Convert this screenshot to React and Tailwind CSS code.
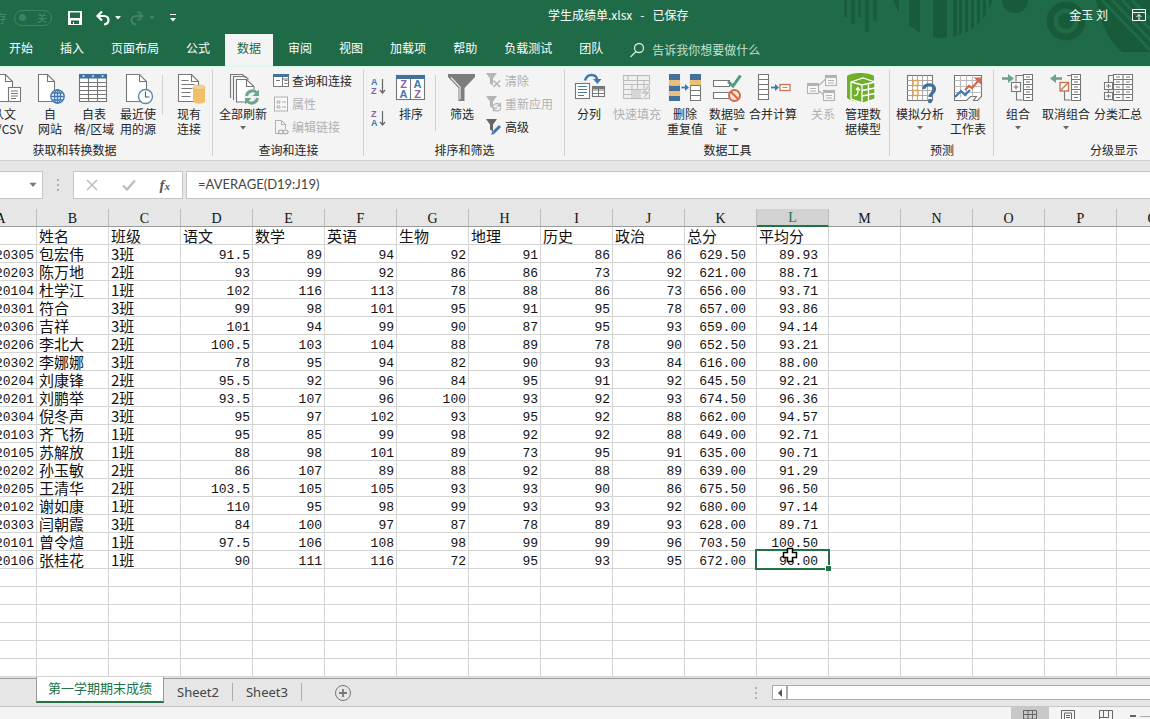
const TABS = ['开始', '插入', '页面布局', '公式', '数据', '审阅', '视图', '加载项', '帮助', '负载测试', '团队'];

const COLUMNS = ['A', 'B', 'C', 'D', 'E', 'F', 'G', 'H', 'I', 'J', 'K', 'L', 'M', 'N', 'O', 'P', 'Q'];

const TITLES = ['学号', '姓名', '班级', '语文', '数学', '英语', '生物', '地理', '历史', '政治', '总分', '平均分'];

const STUDENTS = [
  ['120305', '包宏伟', '3班', '91.5', '89', '94', '92', '91', '86', '86', '629.50', '89.93'],
  ['120203', '陈万地', '2班', '93', '99', '92', '86', '86', '73', '92', '621.00', '88.71'],
  ['120104', '杜学江', '1班', '102', '116', '113', '78', '88', '86', '73', '656.00', '93.71'],
  ['120301', '符合', '3班', '99', '98', '101', '95', '91', '95', '78', '657.00', '93.86'],
  ['120306', '吉祥', '3班', '101', '94', '99', '90', '87', '95', '93', '659.00', '94.14'],
  ['120206', '李北大', '2班', '100.5', '103', '104', '88', '89', '78', '90', '652.50', '93.21'],
  ['120302', '李娜娜', '3班', '78', '95', '94', '82', '90', '93', '84', '616.00', '88.00'],
  ['120204', '刘康锋', '2班', '95.5', '92', '96', '84', '95', '91', '92', '645.50', '92.21'],
  ['120201', '刘鹏举', '2班', '93.5', '107', '96', '100', '93', '92', '93', '674.50', '96.36'],
  ['120304', '倪冬声', '3班', '95', '97', '102', '93', '95', '92', '88', '662.00', '94.57'],
  ['120103', '齐飞扬', '1班', '95', '85', '99', '98', '92', '92', '88', '649.00', '92.71'],
  ['120105', '苏解放', '1班', '88', '98', '101', '89', '73', '95', '91', '635.00', '90.71'],
  ['120202', '孙玉敏', '2班', '86', '107', '89', '88', '92', '88', '89', '639.00', '91.29'],
  ['120205', '王清华', '2班', '103.5', '105', '105', '93', '93', '90', '86', '675.50', '96.50'],
  ['120102', '谢如康', '1班', '110', '95', '98', '99', '93', '93', '92', '680.00', '97.14'],
  ['120303', '闫朝霞', '3班', '84', '100', '97', '87', '78', '89', '93', '628.00', '89.71'],
  ['120101', '曾令煊', '1班', '97.5', '106', '108', '98', '99', '99', '96', '703.50', '100.50'],
  ['120106', '张桂花', '1班', '90', '111', '116', '72', '95', '93', '95', '672.00', '96.00'],
];

const EMPTY_ROWS = [20, 21, 22, 23, 24, 25];

function Icon({ children }) {
  return (
    <svg viewBox="0 0 32 32" className="w-8 h-8 shrink-0 overflow-visible" fill="none" stroke="#777" strokeWidth="1.1">
      {children}
    </svg>
  );
}

function SmallIcon({ children }) {
  return (
    <svg viewBox="0 0 16 16" className="w-4 h-4 shrink-0 overflow-visible" fill="none" stroke="#777" strokeWidth="1">
      {children}
    </svg>
  );
}

function Caret({ className = 'text-[#666]' }) {
  return (
    <svg viewBox="0 0 6 4" className={`w-[6px] h-[4px] inline-block ${className}`} fill="currentColor">
      <path d="M0 0h6L3 3.5z" />
    </svg>
  );
}

/* ---------- large ribbon icons ---------- */

const TextFileIcon = () => (
  <Icon>
    <path d="M4.5 2.5h13l7 7v20h-20z" fill="#fff" />
    <path d="M17.5 2.5v7h7" />
    <rect x="20.500" y="15.500" width="12" height="14" fill="#fff" />
    <path d="M23 19h7M23 21.500h7M23 24h7M23 26.500h5" />
  </Icon>
);

const WebIcon = () => (
  <Icon>
    <path d="M4.500 2.500h9l7 7v20h-16z" fill="#fff" />
    <path d="M13.500 2.500v7h7" />
    <g stroke="#3f78b0" strokeWidth="1.300">
      <circle cx="23.500" cy="24.500" r="6.700" fill="#eef5fb" />
      <ellipse cx="23.500" cy="24.500" rx="3" ry="6.700" />
      <path d="M17 24.500h13M18 21h11M18 28h11M23.500 18v13" />
    </g>
  </Icon>
);

const TableIcon = () => (
  <Icon>
    <rect x="1.500" y="2.500" width="27" height="27" fill="#fff" />
    <path d="M1.500 10.500h27M1.500 14.500h27M1.500 18.500h27M1.500 22.500h27M1.500 26.500h27M10.500 6v24M19.500 6v24" />
    <path d="M1 2h28v4.500H1z" fill="#41719c" stroke="none" />
    <path d="M4 3.500h3L5.500 5.200zM13.500 3.500h3L15 5.200zM23 3.500h3l-1.500 1.700z" fill="#fff" stroke="none" />
  </Icon>
);

const RecentIcon = () => (
  <Icon>
    <path d="M4.500 2.500h13l7 7v20h-20z" fill="#fff" />
    <path d="M17.500 2.500v7h7" />
    <circle cx="23.500" cy="24.500" r="7" fill="#fff" stroke="#5b87b3" strokeWidth="1.400" />
    <path d="M23.500 19.500v5.500h4" stroke="#555" />
  </Icon>
);

const ConnectionIcon = () => (
  <Icon>
    <path d="M5.500 2.500h13l7 7v20h-20z" fill="#fff" />
    <path d="M18.500 2.500v7h7" />
    <path d="M8.500 8.500h7M8.500 12.500h13M8.500 16.500h11M8.500 20.500h9M8.500 24.500h9" strokeWidth="1" />
    <path d="M20 15.500v13.500c0 3.500 12 3.500 12 0V15.500z" fill="#efbf6b" stroke="none" />
    <ellipse cx="26" cy="15.500" rx="6" ry="2.300" fill="#f5d392" stroke="#e3ae52" strokeWidth=".7" />
  </Icon>
);

const RefreshIcon = () => (
  <Icon>
    <path d="M3.500 26V2.500h12l3 3M6.500 28V4.500h12l3 3" />
    <path d="M9.500 30V7.500h10l7.500 7v15.500z" fill="#fff" />
    <path d="M19.500 7.500v7h7" />
    <circle cx="25" cy="25" r="8" fill="#f3f3f3" stroke="none" />
    <g stroke="#6fa48c" strokeWidth="3">
      <path d="M19.500 24a6 6 0 0 1 10-3.500M30.500 26a6 6 0 0 1-10 3.500" />
    </g>
    <path d="M32 17.500v6.500h-6.500zM18 32.500V26h6.500z" fill="#6fa48c" stroke="none" />
  </Icon>
);

const SortIcon = () => (
  <Icon>
    <rect x="1.500" y="3.500" width="28" height="24" fill="#fff" />
    <path d="M15.500 7v20" />
    <path d="M1 3h29v4H1z" fill="#41719c" stroke="none" />
    <g className="font-['Liberation_Sans'] font-bold text-[11px]" stroke="none" textAnchor="middle">
      <text x="8.500" y="16" fill="#8d5fa8">Z</text>
      <text x="8.500" y="26" fill="#3f78b0">A</text>
      <text x="22.500" y="16" fill="#3f78b0">A</text>
      <text x="22.500" y="26" fill="#8d5fa8">Z</text>
    </g>
  </Icon>
);

const FunnelIcon = () => (
  <Icon>
    <path d="M2 2h27v3L18.500 16v13h-6V16L2 5z" fill="#7d7d7d" stroke="none" />
    <path d="M5 5.500l9 9.500v12.500" stroke="#e4e4e4" strokeWidth="1.300" />
  </Icon>
);

const TextToColumnsIcon = () => (
  <Icon>
    <rect x="2.500" y="11.500" width="14" height="15" fill="#fff" />
    <path d="M5 14.500h9M5 17.500h9M5 20.500h9M5 23.500h6" stroke="#4a7a94" />
    <rect x="19.500" y="14.500" width="12" height="10" fill="#fff" />
    <path d="M19.500 18h12M19.500 21.500h12M25.500 15v9.500" />
    <path d="M19 14.500h13V17H19z" fill="#777" stroke="none" />
    <path d="M12 8.500c2-7 11-7.500 12.500 0" stroke="#3f78b0" strokeWidth="2.600" />
    <path d="M20 7h8.500L24.500 12z" fill="#3f78b0" stroke="none" />
  </Icon>
);

const FlashFillIcon = () => (
  <Icon>
    <g stroke="#bdbdbd">
      <rect x="2.500" y="3.500" width="26" height="23" fill="#f0f0f0" />
      <path d="M2.500 8.500h26M2.500 12.500h26M2.500 17.500h26M2.500 22.500h14M7 3.500v5M16.500 3.500v23M11 12.500v14M23 8.500v9" />
      <path d="M11 18h9v8h-9z" fill="#d6d6d6" stroke="none" />
      <path d="M27 13l-8 9h5l-4 8 10-11h-5l5-6z" fill="#c9c9c9" stroke="#f3f3f3" strokeWidth=".6" />
    </g>
  </Icon>
);

const RemoveDuplicatesIcon = () => (
  <Icon>
    <path d="M.5 2.500h10v26H.5zM21.500 2.500h10v26h-10z" fill="#fff" />
    <path d="M0 2h11v6H0zM0 13.500h11v5.500H0zM0 24h11v5H0zM21 2h11v6H21z" fill="#41719c" stroke="none" />
    <path d="M0 8h11v5.500H0zM0 19h11v5H0zM21 8h11v5.500H21z" fill="#e9bf7a" stroke="none" />
    <path d="M21.500 13.500h10M21.500 18.500h10M21.500 23.500h10" />
    <path d="M12.500 15.500h6" stroke="#3f78b0" strokeWidth="1.800" />
    <path d="M16 12l4 3.500-4 3.500z" fill="#3f78b0" stroke="none" />
  </Icon>
);

const ValidationIcon = () => (
  <Icon>
    <path d="M2.500 8.500h16v6h-16zM2.500 20.500h16v6h-16z" fill="#fff" />
    <path d="M17 9.500l5 4.500 7.500-10.500" stroke="#4f9a80" strokeWidth="3" />
    <circle cx="23.500" cy="23.500" r="5.500" fill="#fbe6dd" stroke="#d2694a" strokeWidth="2" />
    <path d="M19.700 19.700l7.600 7.600" stroke="#d2694a" strokeWidth="2" />
  </Icon>
);

const ConsolidateIcon = () => (
  <Icon>
    <path d="M1.500 2.500h10v25h-10zM1.500 7.500h10M1.500 12.500h10M1.500 17.500h10M1.500 22.500h10" fill="#fff" />
    <path d="M14 15.500h6" stroke="#3f78b0" strokeWidth="1.800" />
    <path d="M18 12l4 3.500-4 3.500z" fill="#3f78b0" stroke="none" />
    <rect x="23" y="12.500" width="10" height="6" fill="#fff" stroke="#cf7650" strokeWidth="1.300" />
    <path d="M25.500 15.500h5" stroke="#999" />
  </Icon>
);

const RelationsIcon = () => (
  <Icon>
    <g stroke="#b3b3b3">
      <path d="M11 14l9-8M11 18l7 6" />
      <rect x=".5" y="11.500" width="11" height="10" fill="#f7f7f7" />
      <rect x="18.500" y="3.500" width="11" height="10" fill="#f7f7f7" />
      <rect x="16.500" y="18.500" width="11" height="10" fill="#f7f7f7" />
      <path d="M3 16.500h6M3 19h6M21 8.500h6M21 11h6M19 23.500h6M19 26h6" />
      <path d="M0 11h12v3H0zM18 3h12v3H18zM16 18h12v3H16z" fill="#b3b3b3" stroke="none" />
    </g>
  </Icon>
);

const DataModelIcon = () => (
  <Icon>
    <path d="M0 4C4 0 22 0 27 4v20c-6 7-21 7-27 2z" fill="#6faf2c" stroke="none" />
    <g fill="#6faf2c" stroke="#fff" strokeWidth="1.300">
      <path d="M4 10l12-4 12 4v17l-12 4-12-4z" />
      <path d="M4 10l11 3 13-3M15 13v17.500M15 18.500l13-2.500M15 24l13-2.500M21.500 11.500V29" />
      <path d="M7 23.500c4 .5 4-2 4-7M9 18l2-2.500 2 3" />
    </g>
  </Icon>
);

const WhatIfIcon = () => (
  <Icon>
    <rect x="3.500" y="3.500" width="25" height="25" fill="#fff" />
    <path d="M8.500 3.500v25M13.500 3.500v25M18.500 3.500v25M23.500 3.500v25M3.500 8.500h25M3.500 13.500h25M3.500 18.500h25M3.500 23.500h25" stroke="#aaa" />
    <path d="M9 8.500h5v5H9zM9 18.500h5v5H9z" fill="#fff" stroke="#e0a04a" strokeWidth="1.400" />
    <path d="M20 17c-.5-5.500 10.500-5.500 10.500 0 0 4-4.500 4-4.500 8" stroke="#41719c" strokeWidth="3.300" />
    <circle cx="26" cy="29" r="2.200" fill="#41719c" stroke="none" />
  </Icon>
);

const ForecastIcon = () => (
  <Icon>
    <path d="M2.500 3.500h27v21l-4 4h-4l3-4h-6l-4 4h-12z" fill="#fff" />
    <path d="M8.500 3.500v22M14.500 3.500v21M20.500 3.500v21M2.500 8.500h27M2.500 14.500h27M2.500 20.500h27" stroke="#bbb" />
    <path d="M3 25l6-6 4 4 5-5" stroke="#3f78b0" strokeWidth="2.200" />
    <path d="M13 18l4-4 3 2 7-8" stroke="#d2694a" strokeWidth="2.200" />
    <path d="M23 6h6v6z" fill="#d2694a" stroke="#d2694a" />
  </Icon>
);

const OutlineTable = () => (
  <g>
    <path d="M21.500 2.500h9v26h-9z" fill="#fff" />
    <path d="M21.500 7.500h9M21.500 12.500h9M21.500 17.500h9M21.500 22.500h9M24 5h4M24 10h4M24 15h4M24 20h4M24 25.500h4" />
  </g>
);

const GroupIcon = () => (
  <Icon>
    <OutlineTable />
    <path d="M21 3.500h-7v6M14.500 19v9h6" />
    <rect x="9.500" y="10.500" width="9" height="9" fill="#fff" />
    <path d="M11.500 15h5M14 12.500v5" />
    <path d="M0 6.500h8" stroke="#6fa48c" strokeWidth="2.600" />
    <path d="M6 2l6 4.500L6 11z" fill="#6fa48c" stroke="none" />
  </Icon>
);

const UngroupIcon = () => (
  <Icon>
    <OutlineTable />
    <path d="M21 3.500h-4M14.500 19v9h6" />
    <rect x="10" y="10.500" width="8.500" height="8.500" fill="#fff" stroke="#cf7650" strokeWidth="1.400" />
    <path d="M10 19l8.500-8.500" stroke="#cf7650" strokeWidth="1.400" />
    <path d="M4 6.500h8" stroke="#6fa48c" strokeWidth="2.600" />
    <path d="M6 2L0 6.500 6 11z" fill="#6fa48c" stroke="none" />
  </Icon>
);

const SubtotalIcon = () => (
  <Icon>
    <path d="M11.500 2.500h19v26h-19zM21 2.500v26M11.500 7.500h19M11.500 12.500h19M11.500 17.500h19M11.500 22.500h19" fill="#fff" />
    <path d="M14 5h4M14 10h4M14 15h4M14 20h4M14 25.500h4M24 5h4M24 10h4M24 15h4M24 20h4M24 25.500h4" />
    <path d="M11 3.500H6.500v23H11" />
    <rect x="2.500" y="10.500" width="8" height="7" fill="#fff" />
    <rect x="2.500" y="20.500" width="8" height="7" fill="#fff" />
    <path d="M4 14h5M6.500 12v4M4 24h5M6.500 22v4" />
  </Icon>
);

/* ---------- small ribbon icons ---------- */

const QueriesIcon = () => (
  <SmallIcon>
    <rect x=".5" y="1.500" width="15" height="12" fill="#fff" />
    <path d="M0 1h16v3H0z" fill="#41719c" stroke="none" />
    <path d="M9.500 4v9.500M3 7.500h4M11.500 7.500h3M11.500 10.500h3M9.500 6h6" />
  </SmallIcon>
);

const PropertiesIcon = () => (
  <SmallIcon>
    <g stroke="#b0b0b0">
      <rect x="1.500" y="1" width="13" height="14" fill="#f8f8f8" />
      <path d="M4 5h3v2H4zM4 10h3v2H4zM9 6h4M9 11h4" />
    </g>
  </SmallIcon>
);

const EditLinksIcon = () => (
  <SmallIcon>
    <g stroke="#b0b0b0">
      <path d="M6 14.500H2.500V1.500h6l4 4V10M8.500 1.500v4h4" />
      <ellipse cx="8" cy="13" rx="2.500" ry="1.800" strokeWidth="1.300" />
      <ellipse cx="12.500" cy="13" rx="2.500" ry="1.800" strokeWidth="1.300" />
    </g>
  </SmallIcon>
);

const ClearIcon = () => (
  <SmallIcon>
    <path d="M0 0h11L7 5.500V12.500l-3-2V5.500z" fill="#b5b5b5" stroke="none" />
    <path d="M7.500 7.500l6.500 6.500M14 7.500L7.500 14" stroke="#b5b5b5" strokeWidth="1.500" />
  </SmallIcon>
);

const ReapplyIcon = () => (
  <SmallIcon>
    <path d="M0 0h11L7 5.500V12.500l-3-2V5.500z" fill="#b5b5b5" stroke="none" />
    <path d="M7 10.500a4 4 0 0 1 7-1.500M15 11.500a4 4 0 0 1-7 2M14.500 6.500V10H11M7.500 15.500V12H11" stroke="#b5b5b5" strokeWidth="1.300" />
  </SmallIcon>
);

const AdvancedIcon = () => (
  <SmallIcon>
    <path d="M0 0h11L7 5.500V12.500l-3-2V5.500z" fill="#666" stroke="none" />
    <path d="M7.500 13.500l6.500-6.500" stroke="#3f78b0" strokeWidth="3" />
    <path d="M5 16l1.300-3.700 2.400 2.400z" fill="#3f78b0" stroke="none" />
  </SmallIcon>
);

function SortOrderIcon({ top, bottom, topColor, bottomColor }) {
  return (
    <svg viewBox="0 0 16 20" className="w-4 h-5 overflow-visible" fill="none">
      <g className="font-['Liberation_Sans'] font-bold text-[9px]">
        <text x="0" y="8" fill={topColor}>{top}</text>
        <text x="0" y="17" fill={bottomColor}>{bottom}</text>
      </g>
      <path d="M11.500 2v14M9 13l2.500 3 2.500-3" stroke="#666" strokeWidth="1.200" />
    </svg>
  );
}

/* ---------- ribbon ---------- */

function BigButton({ icon, lines, width = 'w-12', menu, disabled }) {
  return (
    <button
      disabled={disabled}
      className={`flex flex-col items-center shrink-0 pt-[5px] whitespace-nowrap leading-[15px] ${width} ${disabled ? 'text-[#b1b1b1]' : ''}`}
    >
      {icon}
      <span className="block mt-0.5">{lines[0]}</span>
      {lines[1] && <span className="block">{lines[1]}{menu && <Caret className="text-[#666] ml-1.5 mb-0.5" />}</span>}
      {menu && !lines[1] && <Caret className="text-[#666] mt-[5px]" />}
    </button>
  );
}

function SmallButton({ icon, label, disabled }) {
  return (
    <button disabled={disabled} className={`flex items-center gap-[3px] h-[23px] whitespace-nowrap ${disabled ? 'text-[#b1b1b1]' : ''}`}>
      {icon}
      {label}
    </button>
  );
}

function RibbonGroup({ label, className, inner = '', children }) {
  return (
    <section className={`flex flex-col justify-between shrink-0 relative pb-[3px] ${className}`}>
      <div className={`flex ${inner}`}>{children}</div>
      <h2 className="text-center leading-[15px]">{label}</h2>
      <span className="absolute right-0 top-[3px] bottom-1 w-px bg-[#d2d2d2]" />
    </section>
  );
}

function Ribbon() {
  return (
    <div className="flex h-[95px] shrink-0 border-t border-b border-t-[#d5f8e8] border-b-[#cfcfcf] bg-[#f4f4f4] text-[#262626] overflow-hidden">
      <RibbonGroup label="获取和转换数据" className="w-[277px] -ml-16" inner="justify-end">
        <BigButton icon={<TextFileIcon />} lines={['从文', '本/CSV']} />
        <BigButton icon={<WebIcon />} lines={['自', '网站']} width="w-11" />
        <BigButton icon={<TableIcon />} lines={['自表', '格/区域']} width="w-11" />
        <BigButton icon={<RecentIcon />} lines={['最近使', '用的源']} width="w-11" />
        <span className="w-px h-10 mt-2 mx-0.5 bg-[#d2d2d2]" />
        <BigButton icon={<ConnectionIcon />} lines={['现有', '连接']} />
      </RibbonGroup>

      <RibbonGroup label="查询和连接" className="w-[151px]" inner="pl-0.5">
        <BigButton icon={<RefreshIcon />} lines={['全部刷新']} width="w-14" menu />
        <div className="pt-0.5 pl-0.5">
          <SmallButton icon={<QueriesIcon />} label="查询和连接" />
          <SmallButton icon={<PropertiesIcon />} label="属性" disabled />
          <SmallButton icon={<EditLinksIcon />} label="编辑链接" disabled />
        </div>
      </RibbonGroup>

      <RibbonGroup label="排序和筛选" className="w-[201px]" inner="pl-[3px]">
        <div className="flex flex-col items-center w-6 pt-[10px] gap-3">
          <button aria-label="升序"><SortOrderIcon top="A" bottom="Z" topColor="#3f78b0" bottomColor="#8d5fa8" /></button>
          <button aria-label="降序"><SortOrderIcon top="Z" bottom="A" topColor="#8d5fa8" bottomColor="#3f78b0" /></button>
        </div>
        <BigButton icon={<SortIcon />} lines={['排序']} width="w-10" />
        <span className="w-px h-14 mt-2 ml-1 mr-0.5 bg-[#d2d2d2]" />
        <BigButton icon={<FunnelIcon />} lines={['筛选']} />
        <div className="pt-0.5">
          <SmallButton icon={<ClearIcon />} label="清除" disabled />
          <SmallButton icon={<ReapplyIcon />} label="重新应用" disabled />
          <SmallButton icon={<AdvancedIcon />} label="高级" />
        </div>
      </RibbonGroup>

      <RibbonGroup label="数据工具" className="w-[325px]">
        <BigButton icon={<TextToColumnsIcon />} lines={['分列']} />
        <BigButton icon={<FlashFillIcon />} lines={['快速填充']} disabled />
        <BigButton icon={<RemoveDuplicatesIcon />} lines={['删除', '重复值']} />
        <BigButton icon={<ValidationIcon />} lines={['数据验', '证']} width="w-9" menu />
        <BigButton icon={<ConsolidateIcon />} lines={['合并计算']} width="w-14" />
        <BigButton icon={<RelationsIcon />} lines={['关系']} width="w-11" disabled />
        <BigButton icon={<DataModelIcon />} lines={['管理数', '据模型']} width="w-9" />
      </RibbonGroup>

      <RibbonGroup label="预测" className="w-[104px]" inner="pl-1">
        <BigButton icon={<WhatIfIcon />} lines={['模拟分析']} width="w-13" menu />
        <BigButton icon={<ForecastIcon />} lines={['预测', '工作表']} width="w-11" />
      </RibbonGroup>

      <RibbonGroup label="分级显示" className="w-60">
        <BigButton icon={<GroupIcon />} lines={['组合']} menu />
        <BigButton icon={<UngroupIcon />} lines={['取消组合']} menu />
        <BigButton icon={<SubtotalIcon />} lines={['分类汇总']} width="w-14" />
      </RibbonGroup>
    </div>
  );
}

/* ---------- title bar ---------- */

function TitleArt() {
  return (
    <svg viewBox="0 0 310 66" className="absolute right-0 top-0 w-[310px] h-[66px]" fill="#185b3a">
      <defs>
        <clipPath id="disc"><circle cx="103" cy="-13" r="51" /></clipPath>
        <clipPath id="corner"><path d="M256 0h54v52h-28C268 40 260 22 256 0z" /></clipPath>
      </defs>
      <path d="M4 0h3v17H4zM11 0h4v24h-4zM18 0h3v17h-3zM25 0h4v32h-4zM33 0h4v21h-4z" opacity=".8" />
      <g clipPath="url(#disc)">
        <path d="M44 0h15v40H44zM69 0h11v40H69zM93 0h14v40H93zM113 0h4v40h-4zM119 0h3v40h-3zM125 0h3v40h-3zM131 0h3v40h-3zM137 0h3v40h-3zM143 0h3v40h-3zM149 0h3v40h-3z" />
      </g>
      <circle cx="175" cy="0" r="13" />
      <circle cx="226" cy="21" r="16" fill="none" stroke="#185b3a" strokeWidth="7" />
      <circle cx="226" cy="21" r="8" />
      <g clipPath="url(#corner)">
        <path d="M250 0h60v52h-60z" />
        <path d="M262 0l50 52M272 0l50 52M282 0l50 52M292 0l50 52" stroke="#1f6b47" strokeWidth="3" />
      </g>
    </svg>
  );
}

function TitleBar() {
  return (
    <div className="relative flex items-center h-[34px]">
      <div className="flex items-center w-[548px] shrink-0 pt-px">
        <button role="switch" aria-checked="false" className="flex items-center gap-[7px] -ml-[41px] text-[#4a8a6b]">
          自动保存
          <span className="flex items-center justify-between w-[38px] h-4 border border-[#3f8262] rounded-full px-1 text-[10px]">
            <span className="w-[7px] h-[7px] rounded-full bg-[#3f8262]" />
            关
          </span>
        </button>
        <button aria-label="保存" className="ml-[15px]">
          <svg viewBox="0 0 16 16" className="w-4 h-4">
            <path d="M1 1h14v14H1z" fill="#fff" />
            <path d="M3 2.500h10V8H3zM4 10.500h8V14H7v-2H6v2H4z" fill="#1f6b47" />
          </svg>
        </button>
        <button aria-label="撤消" className="flex items-center gap-1 ml-3">
          <svg viewBox="0 0 16 16" className="w-4 h-4" fill="none" stroke="#fff" strokeWidth="2.200">
            <path d="M7 1.500L2.500 6 7 10.500M2.500 6h6.500c6 0 6 8 0 8.500" />
          </svg>
          <Caret className="text-white" />
        </button>
        <button aria-label="恢复" disabled className="flex items-center gap-1 ml-2">
          <svg viewBox="0 0 16 16" className="w-4 h-4" fill="none" stroke="#3f8262" strokeWidth="2.200">
            <path d="M9 1.500L13.500 6 9 10.500M13.500 6H7c-6 0-6 8 0 8.500" />
          </svg>
          <Caret className="text-[#3f8262]" />
        </button>
        <button aria-label="自定义快速访问工具栏" className="flex flex-col items-center gap-[3px] ml-[15px]">
          <span className="w-[6px] h-px bg-white" />
          <Caret className="text-white" />
        </button>
      </div>
      <h1 className="flex gap-2 pb-1">
        <span>学生成绩单.xlsx</span>
        <span>-</span>
        <span>已保存</span>
      </h1>
      <span className="ml-auto pb-1">金玉 刘</span>
      <button aria-label="功能区显示选项" className="ml-6 mr-1 pb-1">
        <svg viewBox="0 0 14 12" className="w-[14px] h-3" fill="none" stroke="#fff">
          <path d="M.5.500h13v11H.5zM.5 3.500h13M7 11V5.500M4.500 8L7 5.500 9.500 8" />
        </svg>
      </button>
    </div>
  );
}

function TabBar() {
  return (
    <nav className="relative flex items-stretch h-8 gap-[3px] -ml-[3px]">
      {TABS.map((tab) => (
        <button
          key={tab}
          className={`px-3 pb-1 whitespace-nowrap ${tab === '数据' ? 'bg-[#f4f4f4] text-[#1f6b47]' : ''}`}
        >
          {tab}
        </button>
      ))}
      <label className="flex items-center gap-[7px] pl-[11px]">
        <svg viewBox="0 0 16 16" className="w-4 h-4" fill="none" stroke="#d5eadf" strokeWidth="1.300">
          <circle cx="10" cy="6" r="4.500" />
          <path d="M7 9.500L1.500 15" />
        </svg>
        <input placeholder="告诉我你想要做什么" className="w-40 pb-px bg-transparent outline-none placeholder:text-[#c5e0d2]" />
      </label>
    </nav>
  );
}

function FormulaBar() {
  return (
    <div className="flex h-12 shrink-0 py-[10px] text-[#444]">
      <div className="flex items-center w-[107px] -ml-16 shrink-0 bg-white border border-[#c6c6c6]">
        <input aria-label="名称框" className="w-20 pl-2 outline-none" />
        <button aria-label="名称框列表" className="flex ml-auto mr-1.5"><Caret className="text-[#777] scale-125" /></button>
      </div>
      <span className="flex flex-col justify-center items-center gap-[3px] w-[30px]">
        <i className="w-0.5 h-0.5 bg-[#b0b0b0]" />
        <i className="w-0.5 h-0.5 bg-[#b0b0b0]" />
        <i className="w-0.5 h-0.5 bg-[#b0b0b0]" />
      </span>
      <div className="flex items-center justify-between w-[110px] shrink-0 px-3 bg-white border border-[#c6c6c6]">
        <button aria-label="取消">
          <svg viewBox="0 0 12 12" className="w-3 h-3" stroke="#bcbcbc" strokeWidth="1.500"><path d="M1 1l10 10M11 1L1 11" /></svg>
        </button>
        <button aria-label="输入">
          <svg viewBox="0 0 14 12" className="w-[14px] h-3" fill="none" stroke="#bcbcbc" strokeWidth="2.300"><path d="M1 6.500L5 10.500 13 1.500" /></svg>
        </button>
        <button aria-label="插入函数" className="font-['Liberation_Serif',serif] italic font-bold text-[15px] leading-4 text-[#555]">
          f<span className="text-[11px]">x</span>
        </button>
      </div>
      <input
        aria-label="编辑栏"
        defaultValue="=AVERAGE(D19:J19)"
        className="flex-1 min-w-0 ml-[3px] pl-[11px] bg-white border border-r-0 border-[#c6c6c6] outline-none font-['Lato',sans-serif] text-[13px]"
      />
    </div>
  );
}

/* ---------- sheet ---------- */

function CellCursor() {
  return (
    <svg viewBox="0 0 16 16" className="absolute left-[25px] -top-1 w-4 h-4" fill="#fff" stroke="#000" strokeWidth="1.500">
      <path d="M5.500 1.500h5v4h4v5h-4v4h-5v-4h-4v-5h4z" />
    </svg>
  );
}

function Cell({ value = '', col, active }) {
  const isText = col === 1 || col === 2;
  const align = isText ? 'pl-0.5 text-left' : col > 9 ? 'pr-[10px] text-right' : 'pr-0.5 text-right';
  return (
    <td
      className={`h-[18px] border-r border-b border-[#d4d4d4] whitespace-nowrap ${active ? 'relative z-10' : ''} ${align} ${
        isText
          ? "align-middle leading-[17px] text-[15px] font-['Noto_Sans_CJK_SC',sans-serif]"
          : "align-bottom leading-3 text-[13px] font-['Liberation_Mono',monospace]"
      }`}
    >
      {value}
      {active && (
        <>
          <span className="absolute -inset-0.5 border-2 border-[#217346]" />
          <span className="absolute -right-[3px] -bottom-[3px] w-[6px] h-[6px] bg-[#217346] border-t border-l border-white" />
          <CellCursor />
        </>
      )}
    </td>
  );
}

function Sheet() {
  return (
    <div className="shrink-0 overflow-hidden bg-white">
      <table className="table-fixed border-separate border-spacing-0 w-[1224px] -ml-[35px] text-[#111]">
        <thead>
          <tr>
            {COLUMNS.map((c) => (
              <th
                key={c}
                className={`h-[18px] p-0 align-bottom leading-[14px] border-r border-r-[#bdbdbd] font-['Liberation_Serif',serif] font-normal text-[14px] ${
                  c === 'L' ? 'bg-[#d2d2d2] text-[#217346] border-b-2 border-b-[#217346]' : 'bg-[#e6e6e6] border-b border-b-[#9b9b9b]'
                }`}
              >
                {c}
              </th>
            ))}
          </tr>
        </thead>
        <tbody>
          <tr>
            {COLUMNS.map((c, i) => (
              <td key={c} className="h-[18px] pl-0.5 leading-[17px] text-[15px] border-r border-b border-[#d4d4d4] whitespace-nowrap">
                {i > 0 && TITLES[i]}
              </td>
            ))}
          </tr>
          {STUDENTS.map((row, r) => (
            <tr key={row[0]}>
              {COLUMNS.map((c, i) => (
                <Cell key={c} col={i} value={row[i]} active={r === 17 && c === 'L'} />
              ))}
            </tr>
          ))}
          {EMPTY_ROWS.map((n) => (
            <tr key={n}>
              {COLUMNS.map((c, i) => <Cell key={c} col={i} />)}
            </tr>
          ))}
        </tbody>
      </table>
    </div>
  );
}

function SheetBar() {
  return (
    <div className="flex h-[30px] shrink-0 border-b border-[#c6c6c6] bg-[#e6e6e6] font-['Noto_Sans','Noto_Sans_CJK_SC',sans-serif] text-[13px] text-[#444]">
      <div className="w-9 mt-px border-t border-[#9b9b9b]" />
      <button className="h-[26px] px-[11px] bg-white border-x border-x-[#9b9b9b] border-b-2 border-b-[#217346] text-[#217346] whitespace-nowrap">
        第一学期期末成绩
      </button>
      <div className="flex flex-1 min-w-0 mt-px border-t border-[#9b9b9b]">
        <button className="h-[18px] mt-1 px-[13px] leading-4 border-r border-[#ababab]">Sheet2</button>
        <button className="h-[18px] mt-1 px-[13px] leading-4 border-r border-[#ababab]">Sheet3</button>
        <button aria-label="新工作表" className="flex items-center ml-8">
          <svg viewBox="0 0 18 18" className="w-[18px] h-[18px]" fill="none" stroke="#777">
            <circle cx="9" cy="9" r="7.500" />
            <path d="M5 9h8M9 5v8" strokeWidth="1.800" />
          </svg>
        </button>
        <div className="flex items-center flex-1 min-w-0 max-w-[395px] ml-auto">
          <span className="flex flex-col gap-[3px] mr-[15px]">
            <i className="w-0.5 h-0.5 bg-[#b0b0b0]" />
            <i className="w-0.5 h-0.5 bg-[#b0b0b0]" />
            <i className="w-0.5 h-0.5 bg-[#b0b0b0]" />
          </span>
          <button aria-label="向左滚动" className="flex items-center justify-center w-[15px] h-[15px] bg-white border border-[#ababab]">
            <svg viewBox="0 0 4 8" className="w-1 h-2" fill="#555"><path d="M4 0v8L0 4z" /></svg>
          </button>
          <div className="flex-1 h-[15px] bg-white border border-r-0 border-[#ababab]" />
        </div>
      </div>
    </div>
  );
}

function StatusBar() {
  return (
    <div className="flex justify-end h-6 shrink-0 bg-[#f4f4f4]">
      <button aria-label="普通" className="flex justify-center w-[38px] pt-[3px] bg-[#c8c8c8]">
        <svg viewBox="0 0 14 14" className="w-[14px] h-[14px]" fill="none" stroke="#666"><path d="M.5.500h13v13H.5zM.5 4.500h13M.5 9h13M5 .5v13M9.500.500v13" /></svg>
      </button>
      <button aria-label="页面布局" className="flex justify-center w-[38px] pt-[3px]">
        <svg viewBox="0 0 14 14" className="w-[14px] h-[14px]" fill="none" stroke="#666"><path d="M.5.500h13v13H.5zM3.500 3h7v9h-7zM5 5.500h4M5 7.500h4M5 9.500h4" /></svg>
      </button>
      <button aria-label="分页预览" className="flex justify-center w-[38px] pt-[3px]">
        <svg viewBox="0 0 14 14" className="w-[14px] h-[14px]" fill="none" stroke="#666"><path d="M.5.500h13v13H.5zM4.500.500v7M9.500.500v7M.5 7.500h9" /></svg>
      </button>
      <button aria-label="缩小" className="w-[6px] ml-[5px] mt-2 h-0.5 bg-[#666]" />
      <span className="w-[10px] h-px ml-1 mt-[9px] bg-[#aaa]" />
    </div>
  );
}

export default function App() {
  return (
    <div className="flex flex-col h-screen overflow-hidden bg-[#e6e6e6] font-['Noto_Sans_CJK_SC','Noto_Sans',sans-serif] text-[12px]">
      <header className="relative shrink-0 bg-[#1f6b47] text-white">
        <TitleArt />
        <TitleBar />
        <TabBar />
      </header>
      <Ribbon />
      <FormulaBar />
      <Sheet />
      <SheetBar />
      <StatusBar />
    </div>
  );
}
